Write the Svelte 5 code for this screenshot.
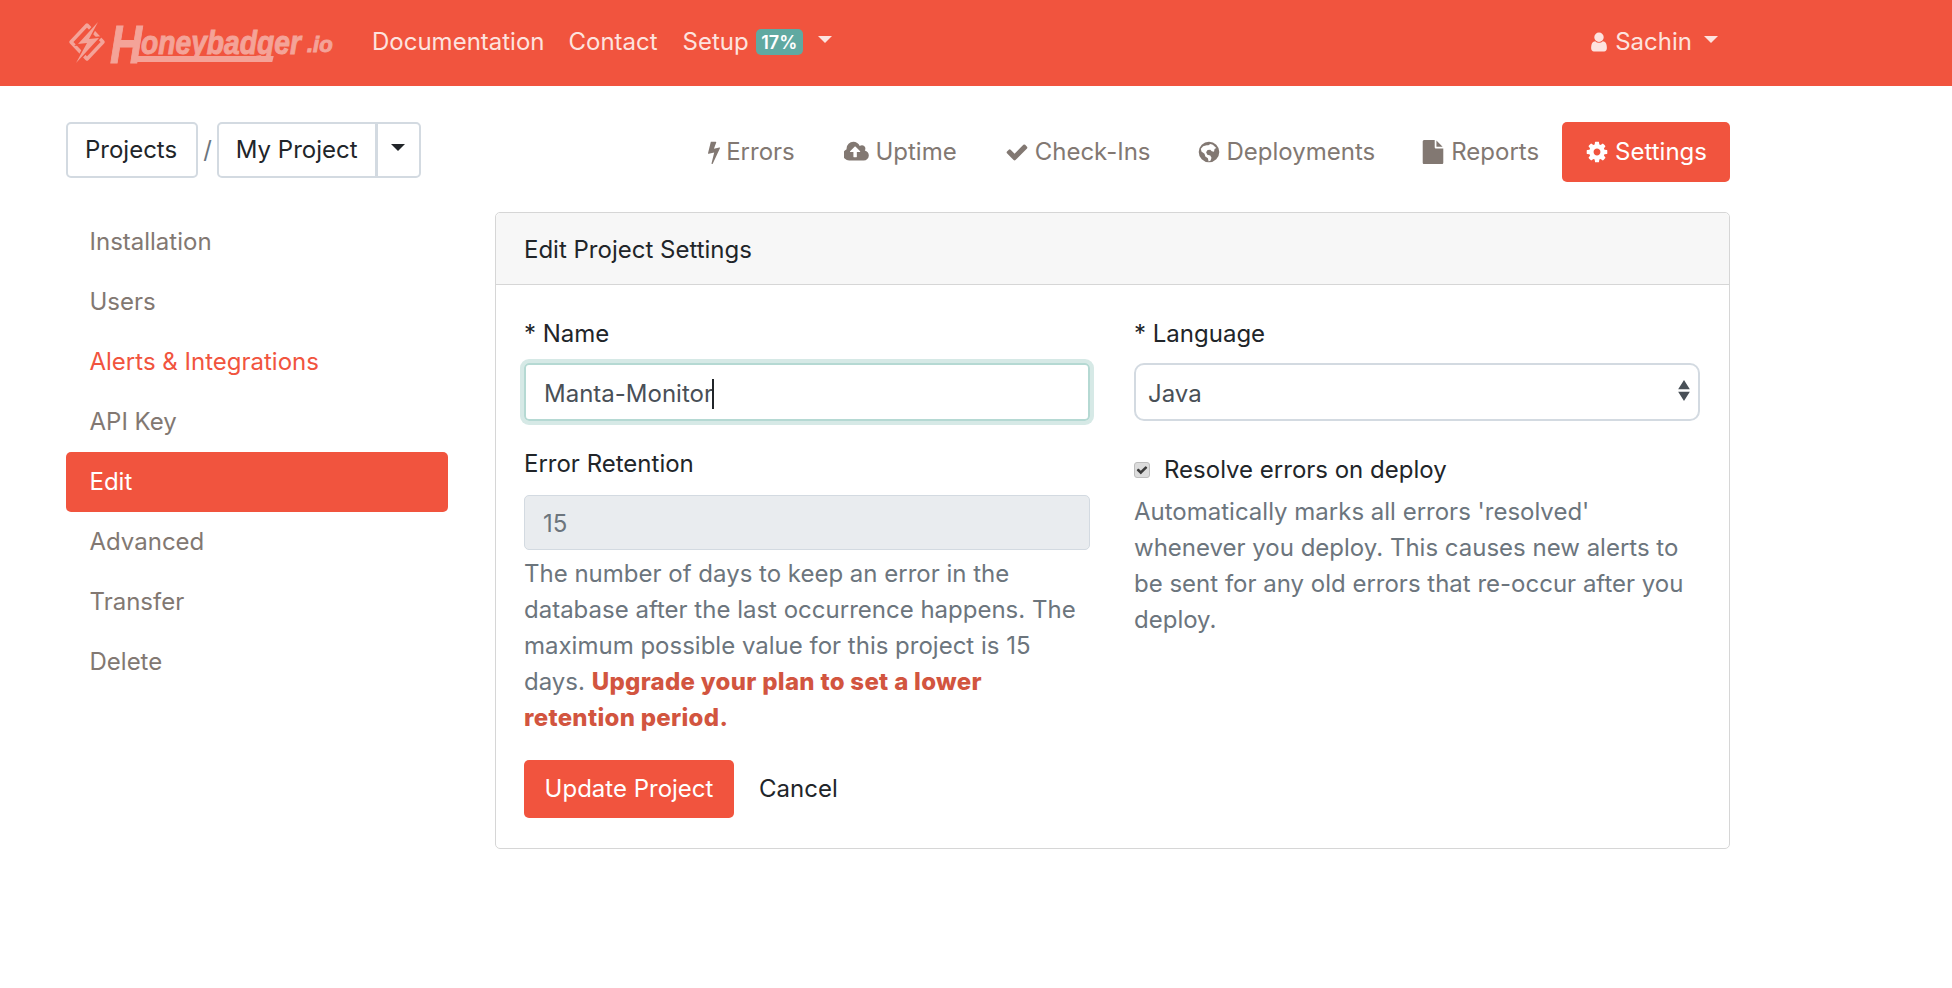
<script>
  const icons = {
    bolt: { box: '448 0 896 1792', d: 'M1333 566q18 20 7 44l-540 1157q-13 25-42 25-4 0-14-2-17-5-25.5-19t-4.5-30l197-808-406 101q-4 1-12 1-18 0-31-11-18-15-13-39l201-825q4-14 16-23t28-9h328q19 0 32 12.5t13 29.5q0 8-5 18l-171 463 396-98q8-2 12-2 19 0 34 15z' },
    cloud: { box: '0 0 1920 1792', d: 'M1216 864q0-14-9-23l-352-352q-9-9-23-9t-23 9l-351 351q-10 12-10 24 0 14 9 23t23 9h224v352q0 13 9.5 22.5t22.5 9.5h192q13 0 22.5-9.5t9.5-22.5v-352h224q13 0 22.5-9.5t9.5-22.5zm640 288q0 159-112.5 271.5t-271.5 112.5h-1088q-185 0-316.5-131.5t-131.5-316.5q0-130 70-240t188-165q-2-30-2-43 0-212 150-362t362-150q156 0 285.5 87t188.5 231q71-62 166-62 106 0 181 75t75 181q0 76-41 138 130 31 213.5 135.5t83.5 238.5z' },
    check: { box: '0 0 1792 1792', d: 'M1671 566q0 40-28 68l-724 724-136 136q-28 28-68 28t-68-28l-136-136-362-362q-28-28-28-68t28-68l136-136q28-28 68-28t68 28l294 295 656-657q28-28 68-28t68 28l136 136q28 28 28 68z' },
    globe: { box: '0 0 1792 1792', d: 'M896 128a768 768 0 1 0 0 1536a768 768 0 1 0 0-1536zM1000 300l180 60 260 230-130 90-40 190-170-30-110-120-200 20-110 170 90 190 220 60 90 170-60 200-150 80-60-240-190-130-60-220-230-170-40-190 170-200 260-70 130 0z' },
    file: { box: '0 0 1792 1792', d: 'M1152 512v-472q22 14 36 28l408 408q14 14 28 36h-472zm-128 32q0 40 28 68t68 28h544v1056q0 40-28 68t-68 28h-1344q-40 0-68-28t-28-68v-1600q0-40 28-68t68-28h800v544z' },
    cog: { box: '0 0 1792 1792', d: 'M1152 896q0-106-75-181t-181-75-181 75-75 181 75 181 181 75 181-75 75-181zm512-109v222q0 12-8 23t-20 13l-185 28q-19 54-39 91 35 50 107 138 10 12 10 25t-9 23q-27 37-99 108t-94 71q-12 0-26-9l-138-108q-44 23-91 38-16 136-29 186-7 28-36 28h-222q-14 0-24.5-8.5t-11.5-21.5l-28-184q-49-16-90-37l-141 107q-10 9-25 9-14 0-25-11-126-114-165-168-7-10-7-23 0-12 8-23 15-21 51-66.5t54-70.5q-27-50-41-99l-183-27q-13-2-21-12.5t-8-23.5v-222q0-12 8-23t19-13l186-28q14-46 39-92-40-57-107-138-10-12-10-24 0-10 9-23 26-36 98.5-107.5t94.5-71.5q13 0 26 10l138 107q44-23 91-38 16-136 29-186 7-28 36-28h222q14 0 24.5 8.5t11.5 21.5l28 184q49 16 90 37l142-107q9-9 24-9 13 0 25 10 129 119 165 170 7 8 7 22 0 12-8 23-15 21-51 66.5t-54 70.5q26 50 41 98l183 28q13 2 21 12.5t8 23.5z' },
    user: { box: '0 0 1792 1792', d: 'M1536 1399q0 109-62.5 187t-150.5 78h-854q-88 0-150.5-78t-62.5-187q0-85 8.5-160.5t31.5-152 58.5-131 94-89 134.5-34.5q131 128 313 128t313-128q76 0 134.5 34.5t94 89 58.5 131 31.5 152 8.5 160.5zm-256-887q0 159-112.5 271.5t-271.5 112.5-271.5-112.5-112.5-271.5 112.5-271.5 271.5-112.5 271.5 112.5 112.5 271.5z' }
  };

  const tabs = [
    { label: 'Errors', icon: 'bolt' },
    { label: 'Uptime', icon: 'cloud' },
    { label: 'Check-Ins', icon: 'check' },
    { label: 'Deployments', icon: 'globe' },
    { label: 'Reports', icon: 'file' },
    { label: 'Settings', icon: 'cog', active: true }
  ];

  const sideLinks = [
    { label: 'Installation' },
    { label: 'Users' },
    { label: 'Alerts & Integrations', alert: true },
    { label: 'API Key' },
    { label: 'Edit', active: true },
    { label: 'Advanced' },
    { label: 'Transfer' },
    { label: 'Delete' }
  ];
</script>

{#snippet icon(name)}
  <svg class="fa" class:wide={name === 'cloud'} class:narrow={name === 'bolt'} viewBox={icons[name].box} aria-hidden="true">
    <path fill="currentColor" fill-rule={name === 'globe' ? 'evenodd' : 'nonzero'} d={icons[name].d} />
  </svg>
{/snippet}

<header class="navbar">
  <a class="logo" href="#top">
    <svg class="logo-mark" viewBox="0 0 38 42" aria-hidden="true">
      <path d="M19 4 35 21 19 38 3 21z" fill="none" stroke="currentColor" stroke-width="3.5" stroke-linejoin="round" />
      <path d="M30 1 10 23l9-1L8 42l23-25-10 1z" fill="currentColor" stroke="#f1543e" stroke-width="3" paint-order="stroke" />
    </svg>
    <span class="logo-word">
      <span class="logo-h">H</span>
      <span class="logo-rest">oneybadger</span>
      <span class="logo-io">.io</span>
    </span>
  </a>
  <nav class="main-nav">
    <a href="#top">Documentation</a>
    <a href="#top">Contact</a>
    <a href="#top" class="setup">Setup <span class="badge">17%</span><i class="caret"></i></a>
  </nav>
  <a class="account" href="#top">{@render icon('user')} Sachin<i class="caret"></i></a>
</header>

<div class="page">
  <div class="top-row">
    <div class="crumbs">
      <button class="btn-outline projects">Projects</button>
      <span class="slash">/</span>
      <div class="split">
        <button class="btn-outline">My Project</button>
        <button class="btn-outline toggle" aria-label="Switch project"><i class="caret"></i></button>
      </div>
    </div>
    <ul class="tabs">
      {#each tabs as tab}
        <li><a href="#top" class:active={tab.active}>{@render icon(tab.icon)}{tab.label}</a></li>
      {/each}
    </ul>
  </div>

  <div class="columns">
    <ul class="side">
      {#each sideLinks as link}
        <li><a href="#top" class:active={link.active} class:alert={link.alert}>{link.label}</a></li>
      {/each}
    </ul>

    <section class="card">
      <h2>Edit Project Settings</h2>
      <form class="card-body">
        <div class="form-grid">
          <div class="col">
            <label for="name">* Name</label>
            <div id="name" class="control focused">Manta-Monitor<span class="text-caret"></span></div>

            <label class="second" for="retention">Error Retention</label>
            <div id="retention" class="control disabled">15</div>
            <p class="help">
              The number of days to keep an error in the database after the last occurrence happens. The
              maximum possible value for this project is 15 days.
              <a href="#top">Upgrade your plan to set a lower<br />retention period.</a>
            </p>
          </div>
          <div class="col">
            <label for="language">* Language</label>
            <div class="select-wrap">
              <select id="language"><option>Java</option></select>
              <svg class="arrows" viewBox="0 0 12 20" aria-hidden="true">
                <path d="M6 1 11 9H1zM6 19 1 11h10z" fill="currentColor" />
              </svg>
            </div>
            <div class="resolve">
              <span class="checkbox">
                <svg viewBox="0 0 1792 1792" aria-hidden="true"><path fill="currentColor" d={icons.check.d} /></svg>
              </span>
              Resolve errors on deploy
            </div>
            <p class="help">
              Automatically marks all errors 'resolved' whenever you deploy. This causes new alerts to be
              sent for any old errors that re-occur after you deploy.
            </p>
          </div>
        </div>
        <div class="actions">
          <button type="button" class="submit">Update Project</button>
          <a href="#top">Cancel</a>
        </div>
      </form>
    </section>
  </div>
</div>

<style>
  :global(body) {
    margin: 0;
    background: #fff;
    color: #212529;
    font-family: Inter, "Liberation Sans", sans-serif;
    font-size: 24px;
    line-height: 36px;
  }

  :global(*) {
    box-sizing: border-box;
  }

  a {
    color: inherit;
    text-decoration: none;
  }

  ul {
    list-style: none;
    margin: 0;
    padding: 0;
  }

  .fa {
    width: 1em;
    height: 1em;
    flex: none;
  }

  .fa.wide {
    width: 1.07em;
  }

  .fa.narrow {
    width: 0.5em;
  }

  .caret {
    display: inline-block;
    width: 0;
    height: 0;
    border-left: 7px solid transparent;
    border-right: 7px solid transparent;
    border-top: 7px solid currentColor;
  }

  .navbar {
    display: flex;
    align-items: center;
    height: 86px;
    padding: 0 0 2px 68px;
    background: #f1543e;
    color: #fde3df;
  }

  .logo {
    display: flex;
    align-items: center;
    width: 304px;
    color: #f4a398;
  }

  .logo-mark {
    width: 38px;
    height: 42px;
    flex: none;
  }

  .logo-word {
    position: relative;
    display: flex;
    height: 46px;
    margin-left: 4px;
    font-family: "Liberation Sans", sans-serif;
    font-weight: 700;
    font-style: italic;
    white-space: nowrap;
    -webkit-text-stroke: 1px currentColor;
  }

  .logo-word span {
    display: block;
    flex: none;
    transform-origin: left top;
  }

  .logo-h {
    width: 31px;
    margin-top: 2px;
    font-size: 54px;
    line-height: 46px;
    transform: scaleX(0.82);
  }

  .logo-rest {
    width: 166px;
    margin-top: 5px;
    font-size: 34px;
    line-height: 36px;
    transform: scaleX(0.83);
  }

  .logo-io {
    margin-top: 13px;
    font-size: 22px;
    line-height: 26px;
  }

  .logo-word::after {
    content: "";
    position: absolute;
    left: 22px;
    top: 37px;
    width: 141px;
    height: 6px;
    background: currentColor;
    transform: skewX(-14deg);
  }

  .main-nav {
    display: flex;
    gap: 24px;
    align-items: center;
  }

  .setup {
    display: flex;
    align-items: center;
    gap: 7px;
    margin-left: 1px;
  }

  .setup .caret {
    margin: -6px 0 0 8px;
  }

  .badge {
    display: inline-block;
    width: 47px;
    height: 26px;
    border-radius: 5px;
    background: #60a9a1;
    color: #fff;
    font-size: 18px;
    line-height: 27px;
    font-weight: 600;
    text-align: center;
  }

  .account {
    display: flex;
    align-items: center;
    gap: 5px;
    margin-left: auto;
    margin-right: 234px;
  }

  .account .fa {
    width: 22px;
    height: 22px;
  }

  .account .caret {
    margin: -6px 0 0 7px;
  }

  .page {
    width: 1664px;
    margin-left: 66px;
  }

  .top-row {
    display: flex;
    justify-content: space-between;
    align-items: flex-start;
    padding-top: 36px;
  }

  .crumbs {
    display: flex;
    align-items: center;
    gap: 5px;
  }

  .slash {
    color: #6c757d;
  }

  .split {
    display: flex;
  }

  .btn-outline {
    height: 56px;
    padding: 0 17px;
    border: 2px solid #d3dae1;
    border-radius: 5px;
    background: #fff;
    color: #212529;
    font: inherit;
  }

  .btn-outline.projects {
    padding: 0 19px 0 17px;
  }

  .split .btn-outline {
    border-radius: 5px 0 0 5px;
  }

  .split .toggle {
    display: flex;
    align-items: center;
    justify-content: center;
    width: 45px;
    padding: 0;
    margin-left: -1px;
    border-radius: 0 5px 5px 0;
  }

  .toggle .caret {
    margin-top: -6px;
  }

  .tabs {
    display: flex;
    color: #827872;
  }

  .tabs li:nth-child(1) {
    margin-right: 3px;
  }

  .tabs li:nth-child(2) {
    margin-right: 2px;
  }

  .tabs a {
    display: flex;
    align-items: center;
    gap: 6px;
    height: 60px;
    padding: 0 23px;
    border-radius: 5px;
  }

  .tabs a.active {
    background: #f1543e;
    color: #fff;
  }

  .columns {
    display: flex;
    gap: 47px;
    margin-top: 30px;
    align-items: flex-start;
  }

  .side {
    width: 382px;
    flex: none;
    color: #827872;
  }

  .side a {
    display: block;
    height: 60px;
    padding: 0 23.5px;
    line-height: 60px;
    border-radius: 5px;
  }

  .side a.alert {
    color: #f1543e;
  }

  .side a.active {
    background: #f1543e;
    color: #fff;
  }

  .card {
    flex: 1;
    height: 637px;
    border: 1px solid #d6d6d6;
    border-radius: 5px;
  }

  h2 {
    height: 72px;
    margin: 0;
    padding: 0 28px;
    background: #f7f7f7;
    border-bottom: 1px solid #d6d6d6;
    border-radius: 5px 5px 0 0;
    font-size: inherit;
    font-weight: 400;
    line-height: 73px;
  }

  .card-body {
    padding: 31px 28px 0;
  }

  .form-grid {
    display: grid;
    grid-template-columns: 566px 566px;
    gap: 44px;
  }

  label {
    display: block;
    height: 36px;
    margin-bottom: 11px;
  }

  label.second {
    margin-top: 25px;
    margin-bottom: 13px;
  }

  .control {
    height: 55px;
    padding: 0 18px;
    border: 2px solid #d3dae1;
    border-radius: 5px;
    color: #495057;
    line-height: 55px;
  }

  .control.focused {
    height: 58px;
    border-color: #b5d9d3;
    box-shadow: 0 0 0 4px #d6e9e6;
    line-height: 57px;
  }

  .control.disabled {
    background: #e9ecef;
    border-width: 1px;
    color: #6c757d;
  }

  .text-caret {
    display: inline-block;
    width: 2px;
    height: 30px;
    margin-left: -1px;
    background: #212529;
    vertical-align: -7px;
  }

  .select-wrap {
    position: relative;
    color: #495057;
  }

  select {
    display: block;
    width: 100%;
    height: 58px;
    padding: 3px 12px 0;
    border: 2px solid #d3dae1;
    border-radius: 10px;
    background: #fff;
    color: #495057;
    font: inherit;
    appearance: none;
  }

  .arrows {
    position: absolute;
    right: 9px;
    top: 15px;
    width: 14px;
    height: 25px;
    color: #495057;
  }

  .resolve {
    display: flex;
    align-items: center;
    margin-top: 31px;
    height: 36px;
  }

  .checkbox {
    display: flex;
    align-items: center;
    justify-content: center;
    width: 16px;
    height: 16px;
    margin-right: 14px;
    border-radius: 3px;
    background: #dcdcdc;
    border: 1px solid #bdbdbd;
    color: #3a3a3a;
  }

  .checkbox svg {
    width: 12px;
    height: 12px;
  }

  .help {
    margin: 6px 0 0;
    color: #6c757d;
  }

  .help a {
    color: #d2553f;
    font-weight: 800;
    letter-spacing: 0.3px;
  }

  .actions {
    display: flex;
    align-items: center;
    gap: 25px;
    margin-top: 24px;
  }

  .submit {
    width: 210px;
    height: 58px;
    border: 0;
    border-radius: 5px;
    background: #f1543e;
    color: #fff;
    font: inherit;
  }
</style>
